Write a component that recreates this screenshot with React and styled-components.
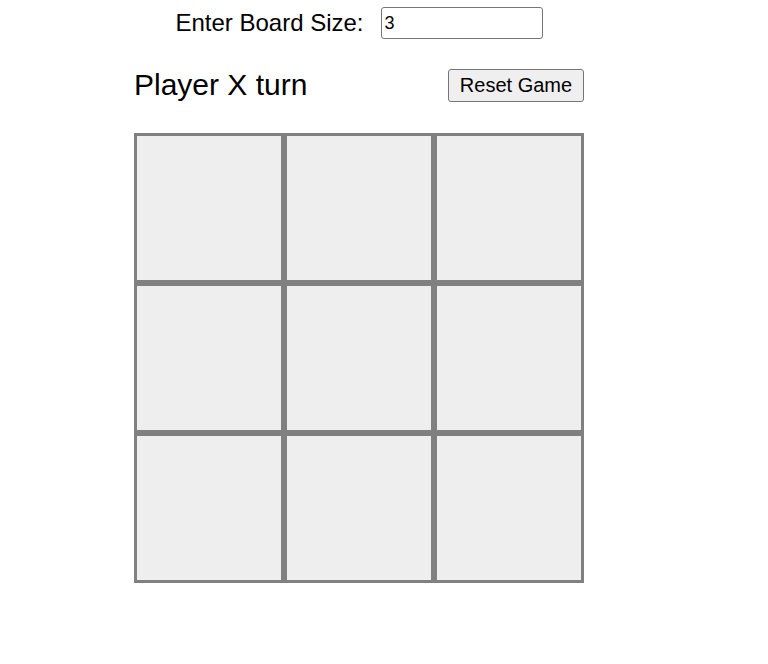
import React, { useState } from 'react';
import styled, { createGlobalStyle } from 'styled-components';

const GlobalStyle = createGlobalStyle`
  body {
    margin: 0;
    background: #fff;
    font-family: "Liberation Sans", Arial, sans-serif;
    color: #000;
  }
`

const Page = styled.div`
  display: flex;
  flex-direction: column;
  width: 450px;
  margin-left: 134px;
`

const SizeBar = styled.div`
  display: flex;
  justify-content: center;
  align-items: center;
  gap: 17px;
  margin-top: 7px;
  height: 32px;
`

const SizeLabel = styled.label`
  font-size: 24px;
`

const SizeInput = styled.input`
  box-sizing: border-box;
  width: 162px;
  height: 32px;
  padding: 0 3px;
  font-family: "Liberation Sans", Arial, sans-serif;
  font-size: 18px;
  color: #000;
  border: 1px solid #767676;
  border-radius: 3px;
  outline: none;
`

const StatusRow = styled.div`
  display: flex;
  justify-content: space-between;
  align-items: center;
  margin-top: 28px;
  height: 36px;
`

const Status = styled.div`
  font-size: 30px;
`

const ResetButton = styled.button`
  box-sizing: border-box;
  height: 33px;
  width: 136px;
  padding: 0;
  font-family: "Liberation Sans", Arial, sans-serif;
  font-size: 20px;
  color: #000;
  background: #efefef;
  border: 1px solid #767676;
  border-radius: 3px;
`

const Board = styled.div`
  display: grid;
  grid-template-columns: repeat(${p => p.$size}, 150px);
  margin-top: 30px;
`

const Cell = styled.div`
  box-sizing: border-box;
  width: 150px;
  height: 150px;
  background: #eeeeee;
  border: 3px solid #808080;
`

const App = () => {
  const [size, setSize] = useState(3);
  const cells = Array.from({ length: size * size });

  return (
    <>
      <GlobalStyle />
      <Page>
        <SizeBar>
          <SizeLabel>Enter Board Size:</SizeLabel>
          <SizeInput
            type="text"
            value={size}
            onChange={e => setSize(Number(e.target.value) || 3)}
          />
        </SizeBar>
        <StatusRow>
          <Status>Player X turn</Status>
          <ResetButton>Reset Game</ResetButton>
        </StatusRow>
        <Board $size={size}>
          {cells.map((_, i) => <Cell key={i} />)}
        </Board>
      </Page>
    </>
  );
};

export default App;
